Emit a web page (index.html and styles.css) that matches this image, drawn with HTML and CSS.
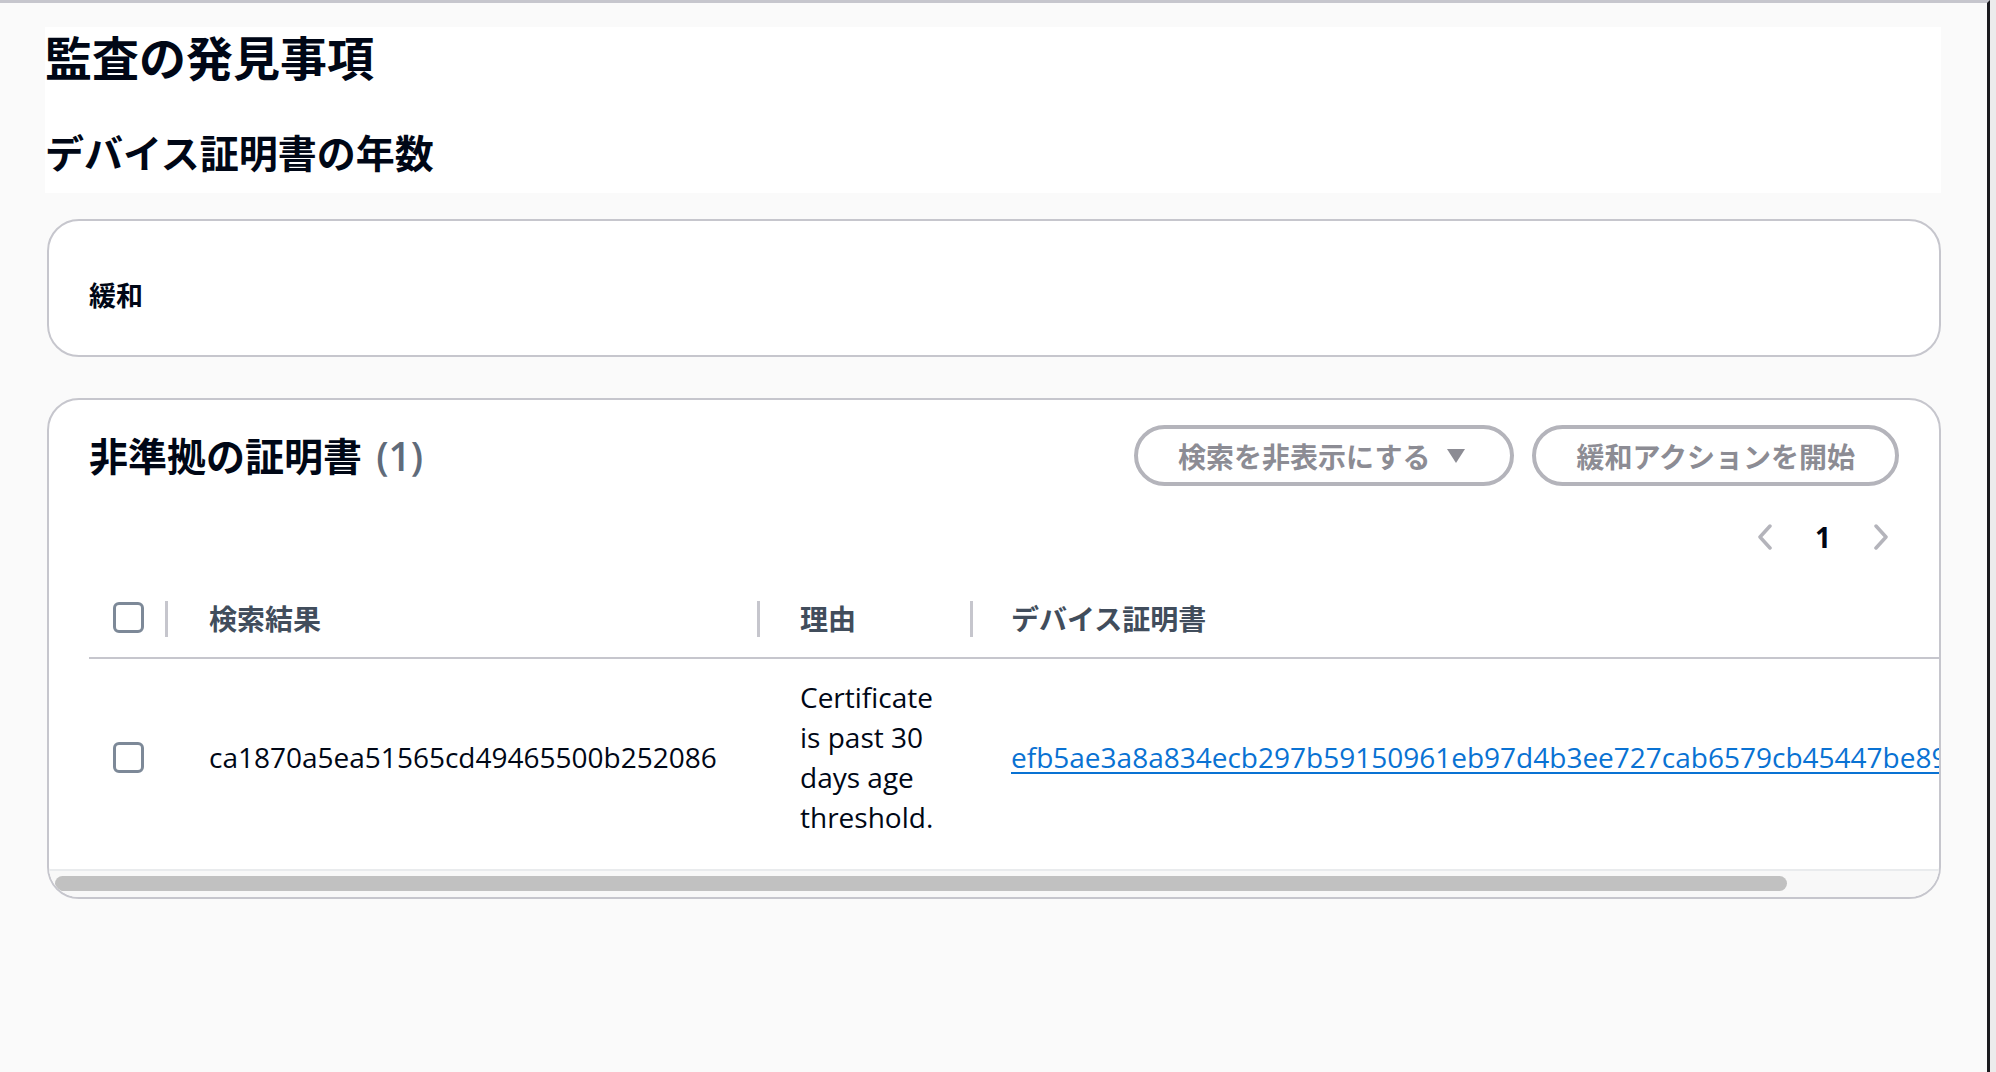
FILE: index.html
```html
<!DOCTYPE html>
<html lang="ja">
<head>
  <meta charset="UTF-8">
  <title>監査の発見事項</title>
  <link rel="stylesheet" href="styles.css">
</head>
<body>
  <div class="screen">
    <div class="main">

      <!-- page header -->
      <div class="page-header">
        <h1>監査の発見事項</h1>
        <h2>デバイス証明書の年数</h2>
      </div>

      <!-- mitigation -->
      <div class="card">
        <div class="card-simple">緩和</div>
      </div>

      <!-- non compliant certificates -->
      <div class="card card-table">
        <div class="table-header">
          <div class="table-title">非準拠の証明書 <span class="counter">(1)</span></div>
          <div class="actions">
            <button class="btn">検索を非表示にする
              <svg class="caret" width="20" height="16" viewBox="0 0 20 16"><path d="M1 1 L19 1 L10 15 Z" fill="#8c8c94"/></svg>
            </button>
            <button class="btn">緩和アクションを開始</button>
          </div>
        </div>

        <div class="pager">
          <svg width="16" height="26" viewBox="0 0 16 26"><polyline points="13,2 3,13 13,24" fill="none" stroke="#b4b4bb" stroke-width="3.5" stroke-linejoin="round" stroke-linecap="round"/></svg>
          <span class="page-num">1</span>
          <svg width="16" height="26" viewBox="0 0 16 26"><polyline points="3,2 13,13 3,24" fill="none" stroke="#b4b4bb" stroke-width="3.5" stroke-linejoin="round" stroke-linecap="round"/></svg>
        </div>

        <div class="table-wrap">
          <table>
            <colgroup>
              <col class="c-check">
              <col class="c-find">
              <col class="c-reason">
              <col class="c-cert">
            </colgroup>
            <thead>
              <tr>
                <th class="cell-check"><span class="checkbox"></span></th>
                <th class="sep">検索結果</th>
                <th class="sep">理由</th>
                <th class="sep">デバイス証明書</th>
              </tr>
            </thead>
            <tbody>
              <tr>
                <td class="cell-check"><span class="checkbox"></span></td>
                <td>ca1870a5ea51565cd49465500b252086</td>
                <td>Certificate is past 30 days age threshold.</td>
                <td><a href="#">efb5ae3a8a834ecb297b59150961eb97d4b3ee727cab6579cb45447be89a1c3d</a></td>
              </tr>
            </tbody>
          </table>
        </div>

        <div class="hscroll">
          <div class="thumb"></div>
        </div>
      </div>

    </div>
  </div>
</body>
</html>
```

FILE: styles.css
```css
* { box-sizing: border-box; }
body {
  margin: 0;
  background: #ececec;
  font-family: "Open Sans", "Noto Sans CJK JP", sans-serif;
  color: #000716;
}
.screen {
  width: 1990px;
  height: 1072px;
  background: #fafafa;
  border-top: 3px solid #c6c6cd;
  border-right: 3px solid #1b1b1f;
}
.main {
  padding: 24px 46px 0 45px;
}

/* header */
.page-header {
  background: #fff;
  padding-bottom: 16px;
}
h1 {
  margin: 0;
  font-size: 47px;
  line-height: 62px;
  font-weight: 700;
}
h2 {
  margin: 40px 0 0 0;
  font-size: 39px;
  line-height: 48px;
  font-weight: 700;
}

/* cards */
.card {
  margin-left: 2px;
  background: #fff;
  border: 2px solid #c6c6cd;
  border-radius: 32px;
  margin-top: 26px;
  overflow: hidden;
}
.card-simple {
  padding: 55px 40px 39px 40px;
  font-size: 27px;
  line-height: 40px;
  font-weight: 700;
}
.card-table {
  margin-top: 41px;
}

.table-header {
  display: flex;
  justify-content: space-between;
  align-items: center;
  padding: 25px 40px 0 40px;
}
.table-title {
  font-size: 39px;
  line-height: 61px;
  font-weight: 700;
}
.counter {
  color: #5f6b7a;
  font-weight: 600;
  margin-left: 4px;
}
.actions {
  display: flex;
  gap: 18px;
}
.btn {
  height: 61px;
  padding: 0 40px;
  border: 4px solid #b4b4bb;
  border-radius: 31px;
  background: #fff;
  color: #8c8c94;
  font-family: inherit;
  font-size: 28px;
  font-weight: 700;
  display: flex;
  align-items: center;
  gap: 16px;
}
.caret { margin-right: 4px; }

.pager {
  display: flex;
  justify-content: flex-end;
  align-items: center;
  gap: 42px;
  height: 40px;
  margin-top: 31px;
  padding-right: 50px;
}
.page-num {
  font-size: 28px;
  font-weight: 700;
  line-height: 40px;
}

/* table */
.table-wrap {
  margin-top: 20px;
  padding-left: 40px;
  overflow: hidden;
}
table {
  border-collapse: separate;
  border-spacing: 0;
  table-layout: fixed;
  width: 2281px;
  font-size: 28px;
  line-height: 40px;
}
.c-check { width: 76px; }
.c-find { width: 592px; }
.c-reason { width: 213px; }
.c-cert { width: 1400px; }
th {
  position: relative;
  text-align: left;
  color: #414d5c;
  font-weight: 700;
  padding: 22px 0 18px 43px;
  border-bottom: 2px solid #c6c6cd;
}
th.sep::before {
  content: "";
  position: absolute;
  left: 0;
  top: 24px;
  width: 3px;
  height: 36px;
  background: #c6c6cd;
}
th:nth-child(2), td:nth-child(2) { padding-left: 44px; }
th:nth-child(4), td:nth-child(4) { padding-left: 41px; }
th.cell-check { vertical-align: top; padding-top: 25px; }
td {
  padding: 18px 30px 32px 43px;
  vertical-align: middle;
}
td:nth-child(4) { white-space: nowrap; }
th.cell-check, td.cell-check { padding-left: 24px; padding-right: 0; }
.checkbox {
  display: block;
  width: 31px;
  height: 31px;
  border: 3px solid #7d8998;
  border-radius: 6px;
}
a {
  color: #0972d3;
  text-decoration: underline;
  text-underline-offset: 4px;
  text-decoration-thickness: 2px;
}

/* horizontal scrollbar */
.hscroll {
  height: 28px;
  border-top: 2px solid #e9ebed;
  background: #f8f8f8;
  padding: 5px 0 0 6px;
}
.thumb {
  width: 1732px;
  height: 15px;
  border-radius: 8px;
  background: #c1c1c1;
}
```
